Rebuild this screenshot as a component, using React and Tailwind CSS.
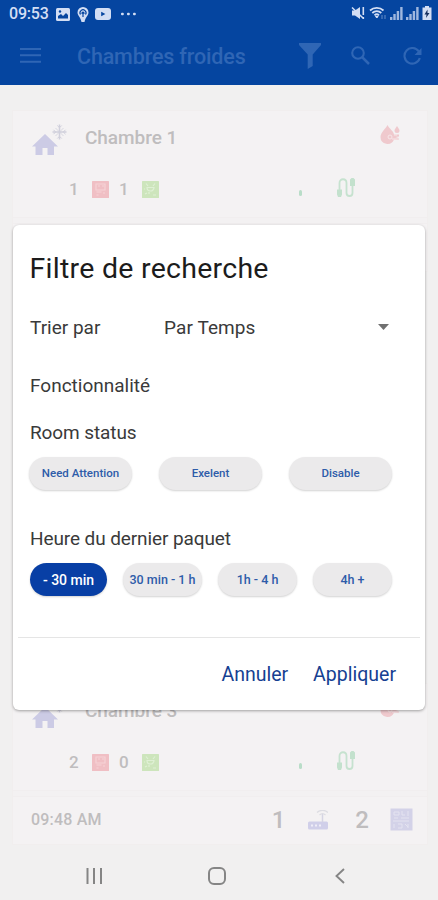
import { useState } from 'react';

const rooms = [
  { name: 'Chambre 1', bad: 1, good: 1 },
  { name: 'Chambre 3', bad: 2, good: 0, time: '09:48 AM', gateways: 1, boards: 2 },
];

function StatusBar() {
  return (
    <div className="flex h-[28px] items-center pl-[9px] pr-[6px] text-[#d3def4]">
      <span className="w-[47px] whitespace-nowrap text-[16px] font-medium leading-none tracking-[-0.2px]">09:53</span>
      <svg className="h-[13px] w-[14px]" viewBox="0 0 14 13">
        <rect width="14" height="13" rx="1.500" fill="currentColor" />
        <path d="M2 10.500V8l3-2 2 2 3-3 2 2v3.500Z" fill="#0545a0" />
        <circle cx="4" cy="3.500" r="1.200" fill="#0545a0" />
      </svg>
      <svg className="ml-[7px] h-[15px] w-[12px]" viewBox="0 0 12 15">
        <path d="M6 0a5.500 5.500 0 0 0-5.500 5.500C.5 8.500 3.500 10 4.500 15h3C8.500 10 11.500 8.500 11.500 5.500A5.500 5.500 0 0 0 6 0Z" fill="currentColor" />
        <path d="M3.500 7.500a3 3 0 1 1 5 0M6 5v5M4.500 6.500 6 5l1.500 1.500" fill="none" stroke="#0545a0" strokeWidth="1.200" />
      </svg>
      <svg className="ml-[6px] h-[12px] w-[16px]" viewBox="0 0 16 12">
        <rect width="16" height="12" rx="3" fill="currentColor" />
        <path d="m6.200 3.800 4.200 2.200-4.200 2.200Z" fill="#0545a0" />
      </svg>
      <svg className="ml-[10px] h-[4px] w-[15px]" viewBox="0 0 15 4" fill="currentColor">
        <rect x="0" y=".7" width="2.800" height="2.600" rx="1" />
        <rect x="6" y=".7" width="2.800" height="2.600" rx="1" />
        <rect x="12" y=".7" width="2.800" height="2.600" rx="1" />
      </svg>
      <div className="ml-auto flex items-center pb-[2px]">
        <svg className="h-[14px] w-[14px]" viewBox="0 0 14 14">
          <path d="M1 4.500h3L9 1v12L4 9.500H1Z" fill="currentColor" />
          <path d="M1 1.500 12 12M12.300 1v8M12.300 11v2" stroke="currentColor" strokeWidth="1.600" />
        </svg>
        <svg className="ml-[4px] h-[14px] w-[18px]" viewBox="0 0 18 14" fill="none" stroke="currentColor">
          <path d="M1 4.500a10 10 0 0 1 13.500 0M3.300 7a6.500 6.500 0 0 1 9 0M5.500 9.300a3.200 3.200 0 0 1 4.500 0" strokeWidth="1.800" />
          <path d="m6.500 10.500 1.300 1.500 1.300-1.500Z" fill="currentColor" />
          <path d="M13 9v4M16 9v4" strokeWidth="1.200" opacity=".4" />
        </svg>
        <SignalIcon />
        <SignalIcon />
        <svg className="ml-[3px] h-[14px] w-[10px]" viewBox="0 0 10 14">
          <path d="M3 0h4v1.500h2.500V14H.5V1.500H3Z" fill="currentColor" />
          <path d="M5.500 3.500 2.500 8.500h2l-.5 3.500 3.500-5h-2Z" fill="#17305f" />
        </svg>
      </div>
    </div>
  );
}

function SignalIcon() {
  return (
    <svg className="ml-[3px] mt-[1px] h-[13px] w-[13px]" viewBox="0 0 13 13" fill="currentColor" opacity=".75">
      <rect x="0" y="10" width="2.400" height="3" />
      <rect x="3.300" y="7" width="2.400" height="6" />
      <rect x="6.700" y="4" width="2.400" height="9" />
      <rect x="10.200" y="0" width="2.400" height="13" />
    </svg>
  );
}

function AppBar() {
  return (
    <div className="flex h-[57px] items-center pb-[2px] pl-5 pr-4 text-[#2f66b5]">
      <svg className="h-[15px] w-[21px]" viewBox="0 0 21 15" fill="currentColor">
        <path d="M0 0h21v2H0zM0 6.300h21v2H0zM0 12.700h21v2H0z" />
      </svg>
      <h1 className="ml-9 mt-[2px] whitespace-nowrap text-[21.500px] font-medium leading-none tracking-[-0.15px]">Chambres froides</h1>
      <svg className="ml-auto h-[26px] w-[22px]" viewBox="0 0 22 26">
        <path d="M0 0h22v2l-8.300 9.500V23l-5 3V11.500L0 2Z" fill="currentColor" />
      </svg>
      <svg className="ml-[30px] h-[19px] w-[19px]" viewBox="0 0 19 19" fill="none" stroke="currentColor" strokeWidth="2.100">
        <circle cx="7" cy="7" r="5.800" />
        <path d="m11 11 7 7" strokeWidth="2.500" />
      </svg>
      <svg className="ml-[33px] h-[18px] w-[19px]" viewBox="0 0 19 18">
        <path d="M15.800 4.500A7.800 7.800 0 1 0 16.800 11" fill="none" stroke="currentColor" strokeWidth="2.100" />
        <path d="M18.500 1v7H11.500Z" fill="currentColor" />
      </svg>
    </div>
  );
}

function HouseIcon() {
  return (
    <svg className="h-[32px] w-[36px]" viewBox="0 0 36 32">
      <path d="M14 10 1 22.500h3.500V31h7v-7h5v7h6.500v-8.500h4Z" fill="#cccbe5" />
      <g stroke="#d0d0dc" strokeWidth="1.500" fill="none">
        <path d="M28.500.500v15M21.500 8h14" />
        <path d="M24.500 4l8 8M32.500 4l-8 8" strokeWidth=".8" />
        <path d="m26.300 1.500 2.200 2.200 2.200-2.200M26.300 14.500l2.200-2.200 2.200 2.200M22.500 5.800 24.700 8l-2.200 2.200M34.500 5.800 32.300 8l2.200 2.200" strokeWidth="1" />
      </g>
    </svg>
  );
}

function DropIcon() {
  return (
    <svg className="h-[20px] w-[22px]" viewBox="0 0 22 20">
      <path d="M7.500 0C5.500 4 .500 7.500.500 12a7 7 0 0 0 13.500 2.500l4.500.500v-2l-3-1 3.500-.500v-2h-5C13.500 6 9.500 4 7.500 0Z" fill="#efc9cd" />
      <path d="M17 1c-1 2-2.500 3-2.500 4.500a2.500 2.500 0 0 0 5 0C19.500 4 18 3 17 1Z" fill="#efc9cd" />
      <circle cx="10" cy="12" r="2" fill="none" stroke="#f7e6e8" />
      <path d="M12 14h6M14 10h3" stroke="#f7e6e8" />
    </svg>
  );
}

function SensorIcon({ tone }) {
  const red = tone === 'red';
  return (
    <svg className="h-[17px] w-[17px]" viewBox="0 0 17 17">
      <rect width="17" height="17" rx=".5" fill={red ? '#f0bfc4' : '#cde5bc'} />
      {red ? (
        <path d="M4 3h9v6H4ZM6 5h2M10 5h2M4.500 11h5M4.500 14h2M11 12h2" fill="none" stroke="#f5d3d6" strokeWidth="1.200" />
      ) : (
        <path d="M4 2.500 6 5M13 2.500 11 5M5 6.500a3.500 3.500 0 0 0 7 0ZM7 11v2M3 13l2-1M11 14h3M2 8h1" fill="none" stroke="#dff0d5" strokeWidth="1.200" />
      )}
    </svg>
  );
}

function CableIcon() {
  return (
    <svg className="h-[20px] w-[20px]" viewBox="0 0 20 20">
      <path d="M3.500 13V5c0-5 7-5 7 0v10c0 4 6 4 6 0V6" fill="none" stroke="#c6e2cf" strokeWidth="1.800" />
      <path d="M1 11.500h5v5l-1 2.500H2l-1-2.500ZM14 1.500l1.500-1.500h2L19 1.500V8h-5Z" fill="#c3e1cd" />
    </svg>
  );
}

function RouterIcon() {
  return (
    <svg className="h-[20px] w-[20px]" viewBox="0 0 20 20">
      <rect x="0" y="11.500" width="20" height="8" rx="1.500" fill="#d0cfe9" />
      <path d="M3 15.500h2M7 15.500h2M11 15.500h2" stroke="#efeef8" strokeWidth="2" />
      <path d="M14.500 4v8" stroke="#d5d4e3" strokeWidth="1.500" />
      <path d="M9 2.500a8 8 0 0 1 11 0M11.500 5a4.500 4.500 0 0 1 6 0" fill="none" stroke="#dcdce2" strokeWidth="1.200" />
    </svg>
  );
}

function BoardIcon() {
  return (
    <svg className="h-[23px] w-[23px]" viewBox="0 0 23 23">
      <rect x=".5" y=".5" width="22" height="22" fill="#d3d2e8" />
      <path d="M4 4h5v3H4ZM12 3v4h3M18 3v5M4 10h4M11 10h8M3 13h16M4 16v4M8 16h4v4H8M15 16l3 3M18 16v4" fill="none" stroke="#e4e3f0" strokeWidth="1" />
    </svg>
  );
}

function RoomCard({ room }) {
  return (
    <section className="flex h-[162px] flex-col border border-[#f1eeee] bg-[#f4f2f3] font-medium text-[#bfbdbe]">
      <div className="flex h-[53px] items-center pb-[1px] pl-[18px] pr-[25px]">
        <div className="pt-[6px]">
          <HouseIcon />
        </div>
        <h2 className="ml-[18px] whitespace-nowrap text-[19px] leading-none tracking-[-0.05px]">{room.name}</h2>
        <div className="-mt-[5px] ml-auto">
          <DropIcon />
        </div>
      </div>
      <div className="flex h-[53px] items-center pb-[2px] pl-[56px] pr-[71px] text-[17px] leading-none">
        <span className="w-[23px]">{room.bad}</span>
        <SensorIcon tone="red" />
        <span className="ml-[10px] w-[23px]">{room.good}</span>
        <SensorIcon tone="green" />
        <span className="ml-auto mr-[34px] mt-[6px] h-[6px] w-[3px] rounded-full bg-[#b9ddc8]" />
        <div className="-mt-[3px]">
          <CableIcon />
        </div>
      </div>
      <div className="h-[7px] border-y border-[#f1eeef] bg-[#f3f1f2]" />
      {room.time && (
        <div className="flex flex-1 items-center pb-[2px] pl-[18px] pr-[14px] leading-none">
          <span className="whitespace-nowrap text-[16px] tracking-[0.2px]">{room.time}</span>
          <span className="ml-auto text-[24px]">{room.gateways}</span>
          <div className="ml-[23px]">
            <RouterIcon />
          </div>
          <span className="ml-[27px] text-[24px]">{room.boards}</span>
          <div className="ml-[21px]">
            <BoardIcon />
          </div>
        </div>
      )}
    </section>
  );
}

function FilterDialog() {
  const [status, setStatus] = useState('');
  const [lastPacket, setLastPacket] = useState('- 30 min');

  const chip = 'flex h-[33px] items-center justify-center whitespace-nowrap rounded-full pt-[1px] font-medium shadow-[0_1px_2px_rgba(0,0,0,0.18)]';

  return (
    <div
      role="dialog"
      className="absolute left-[13px] top-[225px] flex h-[485px] w-[412px] flex-col rounded-[6px] bg-white text-[#3a3a3a] shadow-[0_1px_3px_rgba(0,0,0,0.35)]"
    >
      <h2 className="ml-[16.500px] mt-[27px] whitespace-nowrap text-[28.500px] leading-[34px] tracking-[0.27px] text-[#1c1c1c]">
        Filtre de recherche
      </h2>
      <div className="mt-[30px] flex h-6 items-center pl-[17px] pr-[36px] text-[19px]">
        <span className="w-[134px] whitespace-nowrap">Trier par</span>
        <span className="whitespace-nowrap tracking-[0.1px]">Par Temps</span>
        <svg className="-mt-[2px] ml-auto h-[6px] w-[11px]" viewBox="0 0 11 6">
          <path d="M0 0h11L5.500 6Z" fill="#707070" />
        </svg>
      </div>
      <h3 className="ml-[17px] mt-[34px] text-[19px] leading-6">Fonctionnalité</h3>
      <h3 className="ml-[17px] mt-[23px] text-[19px] leading-6 tracking-[-0.1px]">Room status</h3>
      <div className="mt-[12px] flex justify-between pl-[16px] pr-[33px] text-[11.500px]">
        {['Need Attention', 'Exelent', 'Disable'].map((label) => (
          <button
            key={label}
            onClick={() => setStatus(label)}
            className={`${chip} w-[103px] ${status === label ? 'bg-[#083fa5] text-white' : 'bg-[#ebeaeb] text-[#2e5ca9]'}`}
          >
            {label}
          </button>
        ))}
      </div>
      <h3 className="ml-[17px] mt-[37px] whitespace-nowrap text-[19px] leading-6 tracking-[-0.1px]">Heure du dernier paquet</h3>
      <div className="mt-[12px] flex justify-between pl-[17px] pr-[33px]">
        {['- 30 min', '30 min - 1 h', '1h - 4 h', '4h +'].map((label) => (
          <button
            key={label}
            onClick={() => setLastPacket(label)}
            className={`${chip} ${lastPacket === label ? 'w-[77px] bg-[#083fa5] text-[14px] text-white' : 'w-[79px] bg-[#ebeaeb] text-[12.500px] text-[#2e5ca9]'}`}
          >
            {label}
          </button>
        ))}
      </div>
      <div className="mx-[5px] mt-[41px] border-t border-[#e5e5e5]" />
      <div className="flex flex-1 items-center justify-end gap-[25px] pr-[29px] pt-[2px] text-[19.500px] text-[#163f92]">
        <button>Annuler</button>
        <button>Appliquer</button>
      </div>
    </div>
  );
}

function NavBar() {
  return (
    <nav className="flex h-[48px] items-center justify-between pl-[86px] pr-[93px] text-[#858585]">
      <svg className="h-[16px] w-[17px]" viewBox="0 0 17 16" stroke="currentColor" strokeWidth="2">
        <path d="M1.500 0v16M8 0v16M15 0v16" />
      </svg>
      <svg className="mr-[4px] h-[18px] w-[18px]" viewBox="0 0 18 18" fill="none" stroke="currentColor" strokeWidth="2">
        <rect x="1" y="1" width="16" height="16" rx="5" />
      </svg>
      <svg className="h-[16px] w-[10px]" viewBox="0 0 10 16" fill="none" stroke="currentColor" strokeWidth="1.900">
        <path d="M9 1 1.500 8 9 15" />
      </svg>
    </nav>
  );
}

export default function App() {
  return (
    <div className="relative flex h-[900px] w-[438px] flex-col overflow-hidden bg-[#f1f0f0] font-[Roboto,sans-serif]">
      <header className="h-[85px] bg-[#0545a0]">
        <StatusBar />
        <AppBar />
      </header>
      <main className="flex h-[767px] flex-col justify-between pb-[7px] pl-[12px] pr-[10px] pt-[25px]">
        {rooms.map((room) => (
          <RoomCard key={room.name} room={room} />
        ))}
      </main>
      <NavBar />
      <FilterDialog />
    </div>
  );
}
